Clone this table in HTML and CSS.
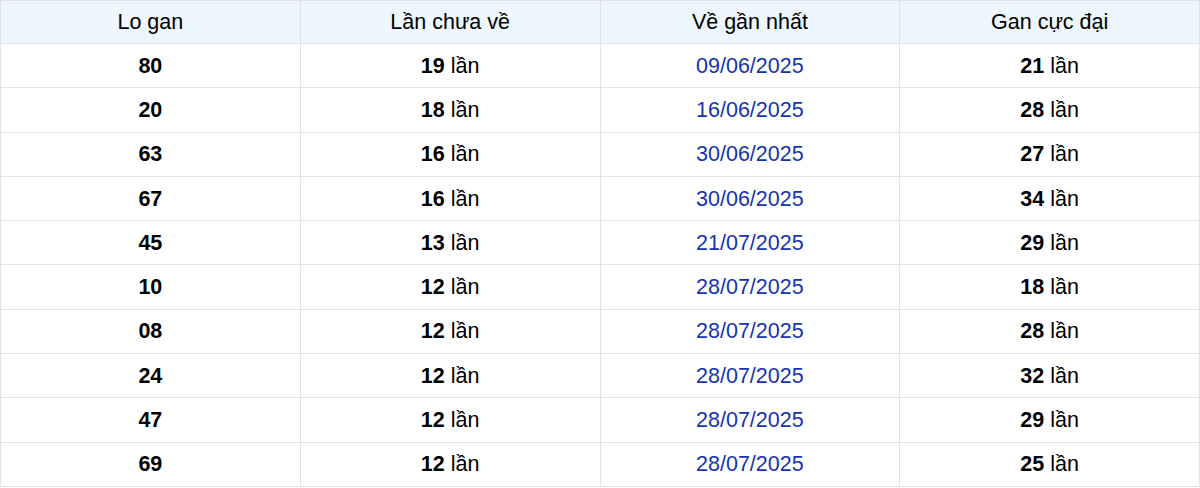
FILE: index.html
```html
<!DOCTYPE html>
<html lang="vi">
<head>
<meta charset="utf-8">
<link rel="stylesheet" href="styles.css">
</head>
<body>
<table class="gan-table">
  <thead>
    <tr><th>Lo gan</th><th>Lần chưa về</th><th>Về gần nhất</th><th>Gan cực đại</th></tr>
  </thead>
  <tbody>
    <tr><td class="num">80</td><td><b>19</b> lần</td><td class="date">09/06/2025</td><td><b>21</b> lần</td></tr>
    <tr><td class="num">20</td><td><b>18</b> lần</td><td class="date">16/06/2025</td><td><b>28</b> lần</td></tr>
    <tr><td class="num">63</td><td><b>16</b> lần</td><td class="date">30/06/2025</td><td><b>27</b> lần</td></tr>
    <tr><td class="num">67</td><td><b>16</b> lần</td><td class="date">30/06/2025</td><td><b>34</b> lần</td></tr>
    <tr><td class="num">45</td><td><b>13</b> lần</td><td class="date">21/07/2025</td><td><b>29</b> lần</td></tr>
    <tr><td class="num">10</td><td><b>12</b> lần</td><td class="date">28/07/2025</td><td><b>18</b> lần</td></tr>
    <tr><td class="num">08</td><td><b>12</b> lần</td><td class="date">28/07/2025</td><td><b>28</b> lần</td></tr>
    <tr><td class="num">24</td><td><b>12</b> lần</td><td class="date">28/07/2025</td><td><b>32</b> lần</td></tr>
    <tr><td class="num">47</td><td><b>12</b> lần</td><td class="date">28/07/2025</td><td><b>29</b> lần</td></tr>
    <tr><td class="num">69</td><td><b>12</b> lần</td><td class="date">28/07/2025</td><td><b>25</b> lần</td></tr>
  </tbody>
</table>
</body>
</html>
```
FILE: styles.css
```css
html, body {
  margin: 0;
  padding: 0;
  background: #fff;
}
.gan-table {
  width: 1200px;
  border-collapse: collapse;
  table-layout: fixed;
  font-family: "Liberation Sans", Arial, sans-serif;
  font-size: 21.5px;
  color: #000;
}
.gan-table th,
.gan-table td {
  border: 1px solid #e2e2e2;
  text-align: center;
  vertical-align: middle;
  padding: 1px 0 0;
}
.gan-table th {
  background: #eef6ff;
  font-weight: normal;
  height: 41px;
}
.gan-table td {
  height: 42.3px;
}
.gan-table .num {
  font-weight: bold;
}
.gan-table .date {
  color: #1633b0;
}
```
